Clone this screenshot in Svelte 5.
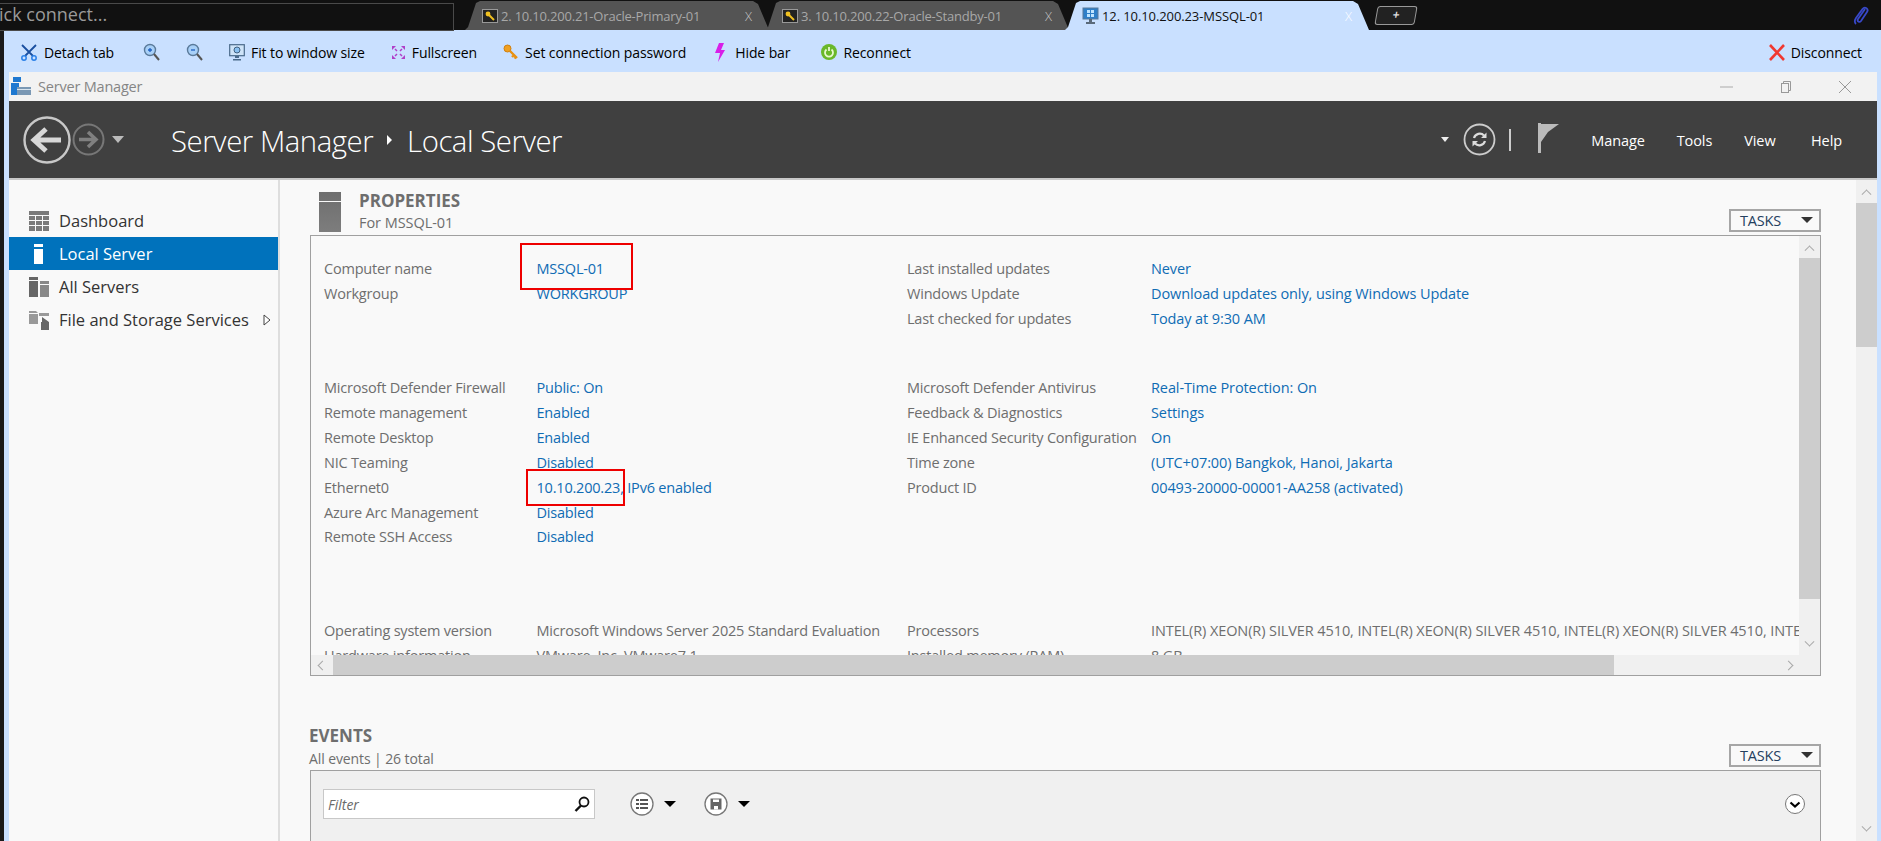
<script>
  const tabs = [
    { n: '2. 10.10.200.21-Oracle-Primary-01', kind: 'key' },
    { n: '3. 10.10.200.22-Oracle-Standby-01', kind: 'key' },
    { n: '12. 10.10.200.23-MSSQL-01', kind: 'win', active: true }
  ];
  const g1 = [
    ['Computer name', 'MSSQL-01', 'Last installed updates', 'Never'],
    ['Workgroup', 'WORKGROUP', 'Windows Update', 'Download updates only, using Windows Update'],
    ['', '', 'Last checked for updates', 'Today at 9:30 AM']
  ];
  const g2 = [
    ['Microsoft Defender Firewall', 'Public: On', 'Microsoft Defender Antivirus', 'Real-Time Protection: On'],
    ['Remote management', 'Enabled', 'Feedback & Diagnostics', 'Settings'],
    ['Remote Desktop', 'Enabled', 'IE Enhanced Security Configuration', 'On'],
    ['NIC Teaming', 'Disabled', 'Time zone', '(UTC+07:00) Bangkok, Hanoi, Jakarta'],
    ['Ethernet0', '10.10.200.23, IPv6 enabled', 'Product ID', '00493-20000-00001-AA258 (activated)'],
    ['Azure Arc Management', 'Disabled', '', ''],
    ['Remote SSH Access', 'Disabled', '', '']
  ];
  const cpu = 'INTEL(R) XEON(R) SILVER 4510, INTEL(R) XEON(R) SILVER 4510, INTEL(R) XEON(R) SILVER 4510, INTEL(R) XEON(R) SILVER 4510';
  const g3 = [
    ['Operating system version', 'Microsoft Windows Server 2025 Standard Evaluation', 'Processors', cpu],
    ['Hardware information', 'VMware, Inc. VMware7,1', 'Installed memory (RAM)', '8 GB']
  ];
  const groups = [g1, g2, g3];
</script>

<div class="page">
  <div class="topbar">
    <div class="quick"><span>Quick connect...</span></div>
    <div class="tabs">
      {#each tabs as t}
        <div class="tab" class:active={t.active}>
          {#if t.kind === 'key'}
            <svg class="tabicon" width="16" height="14" viewBox="0 0 16 14"><rect x=".5" y=".5" width="15" height="13" fill="#222" stroke="#999"/><circle cx="6" cy="5" r="2.4" fill="#f0c020"/><path d="M7 6l5 5" stroke="#f0c020" stroke-width="2"/></svg>
          {:else}
            <svg class="tabicon" width="17" height="18" viewBox="0 0 17 18"><rect x="1" y="1" width="15" height="11" fill="#2f7fc8" stroke="#5a7a9a"/><path d="M5 3h3v3H5zM9 3h3v3H9zM5 7h3v3H5zM9 7h3v3H9z" fill="#bfe4ff"/><path d="M7 12h3v3H7zM4 15h9v2H4z" fill="#5a6a7a"/></svg>
          {/if}
          <span class="tabname">{t.n}</span>
          <span class="tabx">X</span>
        </div>
      {/each}
      <div class="plus">+</div>
    </div>
    <svg class="clip" width="16" height="20" viewBox="0 0 16 20"><path d="M12 4L5 14c-1.500 2.200 1.500 4 3 2l6-9c2-3-2-6-4.500-3L3 13c-2 3-1 5 0 6" fill="none" stroke="#3848c8" stroke-width="1.800"/></svg>
  </div>

  <div class="desk">
    <div class="strip"></div>
    <div class="blue">
      <div class="toolbar">
        <div class="tool"><svg width="17" height="17" viewBox="0 0 17 17"><path d="M1 1l11 11M15 1L4 12" stroke="#1a4fa0" stroke-width="1.800"/><circle cx="3" cy="14" r="2.200" fill="none" stroke="#2a80e8" stroke-width="1.500"/><circle cx="13" cy="14" r="2.200" fill="none" stroke="#2a80e8" stroke-width="1.500"/></svg>Detach tab</div>
        <div class="tool zin"><svg width="17" height="18" viewBox="0 0 17 18"><circle cx="7" cy="7" r="5.500" fill="#a8d0f8" stroke="#5a7a9a" stroke-width="1.400"/><path d="M11 11l5 6" stroke="#555" stroke-width="2"/><path d="M5 7h4M7 5v4" stroke="#2060c0" stroke-width="1.300"/></svg></div>
        <div class="tool"><svg width="17" height="18" viewBox="0 0 17 18"><circle cx="7" cy="7" r="5.500" fill="#a8d0f8" stroke="#5a7a9a" stroke-width="1.400"/><path d="M11 11l5 6" stroke="#555" stroke-width="2"/><path d="M5 7h4" stroke="#2060c0" stroke-width="1.300"/></svg></div>
        <div class="tool"><svg width="16" height="17" viewBox="0 0 16 17"><rect x=".7" y=".7" width="14.600" height="11" fill="#cfe4f8" stroke="#4a6a8a" stroke-width="1.200"/><circle cx="8" cy="6" r="3" fill="#8ac0f0" stroke="#406080"/><path d="M6 12h4v2H6zM4 15h8v1.500H4z" fill="#4a6a8a"/></svg>Fit to window size</div>
        <div class="tool"><svg width="15" height="15" viewBox="0 0 15 15"><path d="M1 1h4L1 5zM14 1v4l-4-4zM1 14v-4l4 4zM14 14h-4l4-4z" fill="#b040c8"/><path d="M4 4l2 2M11 4L9 6M4 11l2-2M11 11L9 9" stroke="#b040c8" stroke-width="1.500"/></svg>Fullscreen</div>
        <div class="tool"><svg width="16" height="16" viewBox="0 0 16 16"><circle cx="4.500" cy="4.500" r="3.500" fill="#f0a020" stroke="#d08010"/><path d="M7 7l7 7M11 11l-2 2M13 13l-1.500 1.500" stroke="#e89010" stroke-width="2.400"/></svg>Set connection password</div>
        <div class="tool bolt"><svg width="10" height="19" viewBox="0 0 10 19"><path d="M4 0h5L6 7h4L3 19l2-9H0z" fill="#d81ee8"/></svg>Hide bar</div>
        <div class="tool recon"><svg width="16" height="16" viewBox="0 0 16 16"><circle cx="8" cy="8" r="8" fill="#6ab82a"/><path d="M5.500 5.500a4 4 0 1 0 5 0M8 3v4" fill="none" stroke="#e8f8d0" stroke-width="1.800"/></svg>Reconnect</div>
        <div class="tool disc"><svg width="18" height="17" viewBox="0 0 18 17"><path d="M2 1l14 15M16 1L2 16" stroke="#f03830" stroke-width="2.600"/></svg>Disconnect</div>
      </div>

      <div class="window">
        <div class="titlebar">
          <svg class="appicon" width="20" height="19" viewBox="0 0 20 19"><rect x="2" y="0" width="8" height="5" fill="#1e78d0"/><rect x="0" y="6" width="8" height="12" fill="#1e78d0"/><rect x="6" y="10" width="14" height="8" fill="#7a98b4"/><rect x="6" y="12" width="14" height="1" fill="#d8e4ee"/></svg>
          <span class="apptitle">Server Manager</span>
          <div class="winbtns">
            <svg width="14" height="14" viewBox="0 0 14 14"><path d="M0 7h13" stroke="#aaa" stroke-width="1"/></svg>
            <svg width="12" height="14" viewBox="0 0 12 14"><rect x="1.500" y="3.500" width="7" height="9" fill="none" stroke="#999"/><path d="M3.500 3.500v-2h7v9h-2" fill="none" stroke="#999"/></svg>
            <svg width="14" height="14" viewBox="0 0 14 14"><path d="M1 1l12 12M13 1L1 13" stroke="#999" stroke-width="1"/></svg>
          </div>
        </div>

        <div class="header">
          <svg class="nav-back" width="48" height="48" viewBox="0 0 48 48"><circle cx="24" cy="24" r="22.500" fill="none" stroke="#c8c8c8" stroke-width="2.400"/><path d="M38 24H14M23 13L11 24l12 11" fill="none" stroke="#d8d8d8" stroke-width="5"/></svg>
          <svg class="nav-fwd" width="33" height="33" viewBox="0 0 33 33"><circle cx="16.500" cy="16.500" r="15" fill="none" stroke="#777" stroke-width="2"/><path d="M7 16.500h16M16 9l8 7.500-8 7.500" fill="none" stroke="#808080" stroke-width="3.500"/></svg>
          <span class="tri-w nav-tri"></span>
          <span class="crumb first">Server Manager</span>
          <span class="caret"></span>
          <span class="crumb">Local Server</span>
          <div class="hright">
            <span class="tri-w small"></span>
            <svg class="refresh" width="33" height="33" viewBox="0 0 33 33"><circle cx="16.500" cy="16.500" r="15" fill="none" stroke="#ccc" stroke-width="1.800"/><path d="M11 15a6 6 0 0 1 10-2.500M22 18a6 6 0 0 1-10 2.500" fill="none" stroke="#ddd" stroke-width="2.200"/><path d="M23.500 9.500v5.500h-5.500zM9.500 23.500v-5.500h5.500z" fill="#ddd"/></svg>
            <span class="vline"></span>
            <svg class="flag" width="21" height="30" viewBox="0 0 21 30"><path d="M0 0h3v30H0z" fill="#bbb"/><path d="M3 1h18L10 9 3 19z" fill="#bbb"/></svg>
            <nav class="menu"><span>Manage</span><span>Tools</span><span>View</span><span class="help">Help</span></nav>
          </div>
        </div>

        <div class="body">
          <aside class="side">
            <div class="item"><svg width="20" height="20" viewBox="0 0 20 20"><path d="M0 0h20v4H0zM0 5h6v4H0zM7 5h6v4H7zM14 5h6v4h-6zM0 10h6v4H0zM7 10h6v4H7zM14 10h6v4h-6zM0 15h6v5H0zM7 15h6v5H7zM14 15h6v5h-6z" fill="#7a7a7a"/></svg>Dashboard</div>
            <div class="item sel"><svg width="20" height="20" viewBox="0 0 20 20"><path d="M5 0h9v3H5zM5 5h9v15H5z" fill="#fff"/></svg>Local Server</div>
            <div class="item"><svg width="20" height="20" viewBox="0 0 20 20"><path d="M0 0h9v3H0zM0 4h9v16H0z" fill="#666"/><path d="M11 4h9v3h-9zM11 8h9v12h-9z" fill="#888"/></svg>All Servers</div>
            <div class="item"><svg width="20" height="20" viewBox="0 0 20 20"><path d="M0 1h7l2 2H0zM0 4h9v10H0zM10 3h10v3H10z" fill="#999"/><path d="M13 7l7 5v8H12V12h1z" fill="#666"/></svg>File and Storage Services<svg class="expand" width="8" height="12" viewBox="0 0 8 12"><path d="M1 1l6 5-6 5z" fill="#fff" stroke="#444"/></svg></div>
          </aside>

          <main class="main">
            <div class="content">
              <div class="sechead">
                <svg class="srv" width="22" height="40" viewBox="0 0 22 40"><defs><linearGradient id="sg" x1="0" x2="0" y1="0" y2="1"><stop offset="0" stop-color="#6e6e6e"/><stop offset="1" stop-color="#7d7d7d"/></linearGradient></defs><path d="M0 0h22v9H0zM0 10h22v30H0z" fill="url(#sg)"/></svg>
                <div class="heads">
                  <div class="h1">PROPERTIES</div>
                  <div class="h2 for">For MSSQL-01</div>
                </div>
                <div class="tasks">TASKS<span class="tri-d"></span></div>
              </div>

              <div class="pbox">
                <div class="pview">
                  {#each groups as g, gi}
                    <div class="group" class:g2={gi === 1} class:g3={gi === 2}>
                      {#each g as r}
                        <span class="lab">{r[0]}</span>
                        <span class:link={gi < 2} class="val">{r[1]}</span>
                        <span class="lab">{r[2]}</span>
                        <span class:link={gi < 2} class="val wide">{r[3]}</span>
                      {/each}
                    </div>
                  {/each}
                </div>
                <div class="vbar">
                  <div class="arrow"><span class="chev up"></span></div>
                  <div class="thumb"></div>
                  <div class="track"></div>
                  <div class="arrow end"><span class="chev down"></span></div>
                </div>
                <div class="hbar">
                  <div class="harrow"><span class="chev left"></span></div>
                  <div class="hthumb"></div>
                  <div class="htrack"></div>
                  <div class="harrow"><span class="chev right"></span></div>
                </div>
                <div class="corner"></div>
              </div>

              <div class="sechead ev">
                <div class="heads nomargin">
                  <div class="h1">EVENTS</div>
                  <div class="h2">All events | 26 total</div>
                </div>
                <div class="tasks">TASKS<span class="tri-d"></span></div>
              </div>

              <div class="ebox">
                <div class="filter"><i>Filter</i>
                  <svg width="16" height="16" viewBox="0 0 16 16"><circle cx="10" cy="6" r="4.500" fill="none" stroke="#111" stroke-width="1.800"/><path d="M7 9.500L1.500 15" stroke="#111" stroke-width="2.400"/></svg>
                </div>
                <div class="cbtn list"><svg width="24" height="24" viewBox="0 0 24 24"><circle cx="12" cy="12" r="11" fill="#fff" stroke="#777" stroke-width="1.300"/><path d="M6 7h3v2H6zM10 7h8v2h-8zM6 11h3v2H6zM10 11h8v2h-8zM6 15h3v2H6zM10 15h8v2h-8z" fill="#555"/></svg><span class="tri-d blk"></span></div>
                <div class="cbtn"><svg width="24" height="24" viewBox="0 0 24 24"><circle cx="12" cy="12" r="11" fill="#fff" stroke="#777" stroke-width="1.300"/><path d="M6.500 6.500h11v11h-11z" fill="#666"/><path d="M9 7.500h6v2.500H9zM10 14h4v3.500h-4z" fill="#fff"/></svg><span class="tri-d blk"></span></div>
                <svg class="expandc" width="20" height="20" viewBox="0 0 20 20"><circle cx="10" cy="10" r="9.500" fill="#fff" stroke="#777"/><path d="M5.500 8.500L10 12.500l4.500-4" fill="none" stroke="#000" stroke-width="2.200"/></svg>
              </div>
            </div>

            <div class="vbar outer">
              <div class="arrow o"><span class="chev up"></span></div>
              <div class="othumb"></div>
              <div class="track"></div>
              <div class="arrow o"><span class="chev down"></span></div>
            </div>
          </main>
        </div>
      </div>
    </div>
  </div>

  <div class="redbox one"></div>
  <div class="redbox two"></div>
</div>

<style>
  :global(body) { margin: 0; background: #111; }
  .page {
    position: relative; width: 1881px; height: 841px; overflow: hidden;
    display: flex; flex-direction: column;
    font-family: "Open Sans", "Noto Sans", sans-serif; font-size: 14px; color: #000;
  }
  .topbar { height: 30px; background: #111; display: flex; flex: none; position: relative; }
  .quick {
    width: 453px; height: 26px; margin-top: 3px; border: 1px solid #4a4a4a; border-left: none; overflow: hidden;
    color: #9a9a9a; font-size: 18px; line-height: 21px; white-space: nowrap; box-sizing: content-box;
  }
  .quick span { margin-left: -26px; display: block; }
  .tabs { display: flex; margin-left: 11px; height: 30px; padding-top: 1px; box-sizing: border-box; }
  .tab {
    width: 306px; margin-right: -6px; background: #545454; color: #a8a8a8; display: flex; align-items: center;
    padding-left: 17px; box-sizing: border-box; font-size: 13px; position: relative; letter-spacing: -.2px;
    clip-path: polygon(0 100%, 1% 90%, 11px 2px, 15px 0, calc(100% - 18px) 0, calc(100% - 13px) 3px, calc(100% - 2px) 100%);
  }
  .tab.active { background: #c9e0ff; color: #111; letter-spacing: -.1px; }
  .tabicon { flex: none; margin-right: 3px; }
  .tabname { white-space: nowrap; }
  .tabx { position: absolute; left: 280px; color: #c8c8c8; font-size: 13px; font-weight: 300; }
  .tab.active .tabx { color: #fff; }
  .plus {
    width: 38px; height: 17px; margin: 5px 0 0 11px; border: 1px solid #999; border-radius: 3px;
    background: #222; color: #ddd; font-size: 12px; font-weight: 700; line-height: 15px; text-align: center; transform: skewX(-10deg);
  }
  .clip { position: absolute; left: 1853px; top: 5px; }

  .desk { flex: 1; display: flex; min-height: 0; }
  .strip { width: 4px; background: #1a1a1a; flex: none; }
  .blue { flex: 1; min-width: 0; background: #c9e0ff; padding: 0 4px 0 5px; display: flex; flex-direction: column; }
  .toolbar { height: 42px; flex: none; display: flex; align-items: center; gap: 26px; margin-left: 12px; padding-top: 2px; box-sizing: border-box; letter-spacing: -.1px; }
  .tool { display: flex; align-items: center; gap: 6px; white-space: nowrap; }
  .tool.zin { margin-left: 3px; }
  .tool.bolt { margin-left: 3px; gap: 10px; }
  .tool.recon { margin-left: 5px; }
  .disc { margin-left: auto; margin-right: 15px; gap: 5px; }

  .window { flex: 1; min-height: 0; display: flex; flex-direction: column; background: #f9f9f9; }
  .titlebar { height: 29px; flex: none; background: #f2f2f2; display: flex; align-items: center; padding-left: 2px; }
  .appicon { margin-right: 7px; }
  .apptitle { color: #858585; font-size: 14.500px; letter-spacing: -.2px; }
  .winbtns { margin-left: auto; margin-right: 25px; display: flex; align-items: center; gap: 46px; }

  .header { height: 77px; flex: none; background: #404040; display: flex; align-items: center; color: #fff; border-bottom: 2px solid #c8c8c8; box-sizing: content-box; }
  .nav-back { margin-left: 14px; }
  .nav-fwd { margin-left: 1px; }
  .tri-w { width: 0; height: 0; border-left: 6.500px solid transparent; border-right: 6.500px solid transparent; border-top: 7px solid #bbb; }
  .tri-w.small { border-width: 5px 4.500px 0; border-top-color: #eee; }
  .nav-tri { margin-left: 7px; }
  .crumb { font-size: 29.300px; font-weight: 300; letter-spacing: -.45px; white-space: nowrap; margin-top: 3px; }
  .crumb.first { margin-left: 47px; }
  .caret { width: 0; height: 0; border-left: 5px solid #fff; border-top: 5px solid transparent; border-bottom: 5px solid transparent; margin: 0 15px 0 14px; }
  .hright { margin-left: auto; display: flex; align-items: center; }
  .refresh { margin-left: 14px; }
  .vline { width: 2px; height: 22px; background: #ccc; margin: 0 27px 0 13px; }
  .flag { margin-bottom: 4px; }
  .menu { display: flex; gap: 32px; margin: 2px 35px 0 32px; font-size: 14.500px; letter-spacing: -.1px; }
  .help { margin-left: 3.500px; }

  .body { flex: 1; min-height: 0; display: flex; }
  .side { width: 269px; flex: none; padding-top: 24px; border-right: 2px solid #dedede; background: #f9f9f9; box-sizing: content-box; }
  .item {
    height: 33px; display: flex; align-items: center; padding-left: 20px; gap: 10px; color: #333; font-size: 16.500px; white-space: nowrap; position: relative;
  }
  .item.sel { background: #0072bc; color: #fff; }
  .expand { position: absolute; left: 254px; }
  .main { flex: 1; min-width: 0; display: flex; background: #f9f9f9; }
  .content { flex: 1; min-width: 0; padding: 0 35px 0 30px; overflow: hidden; }

  .sechead { height: 55px; display: flex; align-items: flex-end; position: relative; }
  .srv { margin: 0 18px 3px 9px; flex: none; }
  .heads { margin-bottom: 1px; }
  .heads.nomargin { margin-bottom: 0; }
  .h1 { font-size: 17px; font-weight: 700; color: #6e6e6e; line-height: 22px; }
  .h2 { font-size: 14px; color: #6e6e6e; line-height: 22px; letter-spacing: -.1px; }
  .h2.for { font-size: 14.500px; letter-spacing: -.05px; }
  .tasks {
    margin-left: auto; margin-bottom: 3px; width: 92px; height: 23px; box-sizing: border-box; border: 2px solid #a6a6a6; background: #f9f9f9;
    color: #24405f; font-size: 14.500px; line-height: 20px; padding-left: 9px; position: relative; letter-spacing: -.2px;
  }
  .tri-d { position: absolute; right: 6px; top: 6px; width: 0; height: 0; border-left: 6.500px solid transparent; border-right: 6.500px solid transparent; border-top: 6px solid #333; }
  .pbox {
    height: 441px; box-sizing: border-box; border: 1.500px solid #a0a0a0;
    display: grid; grid-template-columns: 1fr 21px; grid-template-rows: 1fr 20px; background: #f9f9f9;
  }
  .pview { overflow: hidden; padding: 20.500px 0 0 13px; min-width: 0; min-height: 0; }
  .group { display: grid; grid-template-columns: 212.500px 370.500px 244px 1000px; grid-auto-rows: 24.900px; align-items: center; white-space: nowrap; color: #6e6e6e; letter-spacing: -.2px; font-size: 14.500px; }
  .group.g2 { margin-top: 44px; }
  .group.g3 { margin-top: 69px; }
  .val.link { color: #0f6cb4; }
  .val.wide { letter-spacing: -.1px; }

  .vbar { display: flex; flex-direction: column; background: #f0f0f0; min-height: 0; }
  .vbar .thumb { height: 341px; background: #cdcdcd; flex: none; }
  .track { flex: 1; }
  .arrow { height: 22px; display: flex; align-items: center; justify-content: center; flex: none; }
  .hbar { display: flex; background: #f0f0f0; }
  .harrow { width: 22px; display: flex; align-items: center; justify-content: center; flex: none; }
  .hthumb { width: 1281px; background: #cdcdcd; flex: none; }
  .htrack { flex: 1; }
  .corner { background: #f0f0f0; }
  .chev { width: 7px; height: 7px; border-top: 1.500px solid #a8a8a8; border-left: 1.500px solid #a8a8a8; display: block; box-sizing: border-box; }
  .chev.up { transform: rotate(45deg) translate(2px, 2px); }
  .chev.down { transform: rotate(225deg) translate(2px, 2px); }
  .chev.left { transform: rotate(-45deg); }
  .chev.right { transform: rotate(135deg); }
  .outer { width: 21px; flex: none; }
  .othumb { height: 144px; background: #cdcdcd; flex: none; }
  .arrow.o { height: 23px; }

  .sechead.ev { height: 68px; margin-top: 26px; }
  .ev .h1 { line-height: 23px; margin-left: -1px; }
  .ev .h2 { line-height: 23px; margin-left: -1px; }
  .ev .heads { margin-bottom: 0; }
  .ebox {
    height: 200px; box-sizing: border-box; border: 1.500px solid #a0a0a0; background: #f0f0f0;
    display: flex; align-items: flex-start; padding: 18px 0 0 12px; position: relative;
  }
  .filter {
    width: 272px; height: 30px; box-sizing: border-box; background: #fff; border: 1.500px solid #c8c8c8; display: flex; align-items: center; justify-content: space-between;
    padding: 0 4px; color: #6a6a6a; font-size: 14px;
  }
  .cbtn { position: relative; width: 50px; display: flex; align-items: center; height: 30px; }
  .cbtn.list { margin-left: 35px; margin-right: 24px; }
  .cbtn .tri-d.blk { top: 12px; right: 4px; border-top-color: #000; }
  .cbtn svg { flex: none; }
  .expandc { position: absolute; right: 15px; top: 23px; }

  .redbox { position: absolute; border: 2px solid #ee0000; box-sizing: border-box; pointer-events: none; }
  .redbox.one { left: 520px; top: 243px; width: 113px; height: 47px; }
  .redbox.two { left: 526px; top: 469px; width: 99px; height: 37px; }
</style>
